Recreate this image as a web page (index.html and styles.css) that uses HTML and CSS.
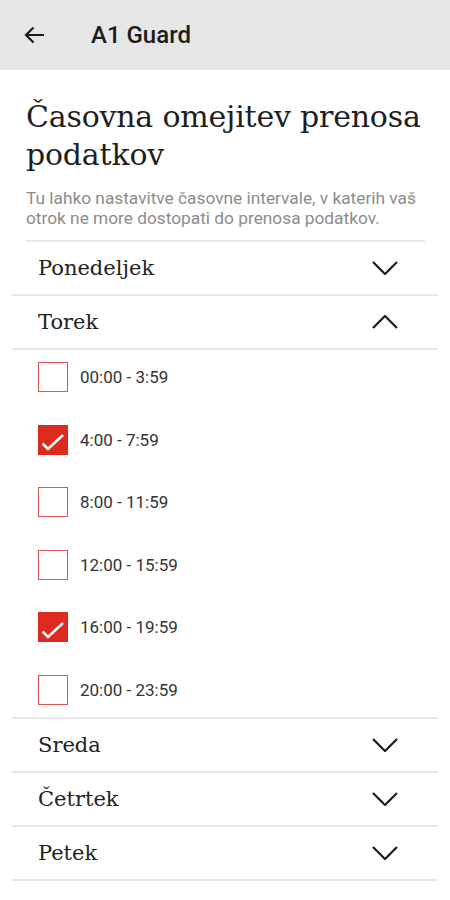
FILE: index.html
```html
<!DOCTYPE html>
<html lang="sl">
<head>
<meta charset="utf-8">
<title>A1 Guard</title>
<link rel="stylesheet" href="styles.css">
</head>
<body>
<header class="appbar">
  <svg class="back" width="21" height="18" viewBox="0 0 21 18"><path d="M20 9H2M9.5 1.5L2 9l7.5 7.5" fill="none" stroke="#1a1a1a" stroke-width="2.2"/></svg>
  <span class="appbar-title">A1 Guard</span>
</header>
<main class="content">
  <div class="intro">
    <h1 class="title">Časovna omejitev prenosa podatkov</h1>
    <p class="desc">Tu lahko nastavitve časovne intervale, v katerih vaš otrok ne more dostopati do prenosa podatkov.</p>
  </div>
  <div class="divider inset"></div>
  <div class="day"><span class="day-name">Ponedeljek</span><svg class="chev" width="26" height="14" viewBox="0 0 26 14"><path d="M1 1l12 12L25 1" fill="none" stroke="#1a1a1a" stroke-width="2.2"/></svg></div>
  <div class="divider"></div>
  <div class="day"><span class="day-name">Torek</span><svg class="chev" width="26" height="14" viewBox="0 0 26 14"><path d="M1 13L13 1l12 12" fill="none" stroke="#1a1a1a" stroke-width="2.2"/></svg></div>
  <div class="divider"></div>
  <div class="slots">
    <div class="slot"><span class="box"></span><span class="time">00:00 - 3:59</span></div>
    <div class="slot"><span class="box checked"><svg width="30" height="30" viewBox="0 0 30 30"><path d="M4.5 19.5l5.5 5.5L25 11" fill="none" stroke="#fff" stroke-width="2.6"/></svg></span><span class="time">4:00 - 7:59</span></div>
    <div class="slot"><span class="box"></span><span class="time">8:00 - 11:59</span></div>
    <div class="slot"><span class="box"></span><span class="time">12:00 - 15:59</span></div>
    <div class="slot"><span class="box checked"><svg width="30" height="30" viewBox="0 0 30 30"><path d="M4.5 19.5l5.5 5.5L25 11" fill="none" stroke="#fff" stroke-width="2.6"/></svg></span><span class="time">16:00 - 19:59</span></div>
    <div class="slot"><span class="box"></span><span class="time">20:00 - 23:59</span></div>
  </div>
  <div class="divider"></div>
  <div class="day"><span class="day-name">Sreda</span><svg class="chev" width="26" height="14" viewBox="0 0 26 14"><path d="M1 1l12 12L25 1" fill="none" stroke="#1a1a1a" stroke-width="2.2"/></svg></div>
  <div class="divider"></div>
  <div class="day"><span class="day-name">Četrtek</span><svg class="chev" width="26" height="14" viewBox="0 0 26 14"><path d="M1 1l12 12L25 1" fill="none" stroke="#1a1a1a" stroke-width="2.2"/></svg></div>
  <div class="divider"></div>
  <div class="day"><span class="day-name">Petek</span><svg class="chev" width="26" height="14" viewBox="0 0 26 14"><path d="M1 1l12 12L25 1" fill="none" stroke="#1a1a1a" stroke-width="2.2"/></svg></div>
  <div class="divider"></div>
</main>
</body>
</html>
```
FILE: styles.css
```css
* { box-sizing: border-box; }
html, body { margin: 0; padding: 0; background: #fff; }
body { font-family: Roboto, "Liberation Sans", sans-serif; color: #222; width: 450px; }

.appbar {
  height: 70px;
  background: #e6e6e6;
  display: flex;
  align-items: center;
  padding-left: 24px;
}
.back { display: block; }
.appbar-title {
  margin-left: 46px;
  font-family: Roboto, sans-serif;
  font-weight: 500;
  font-size: 24px;
  color: #1c1c1c;
}

.content { padding: 0 12px; }

.intro { padding: 28px 14px 0; }
.title {
  margin: 0;
  font-family: "DejaVu Serif", "Liberation Serif", serif;
  font-weight: normal;
  font-size: 30px;
  line-height: 38px;
  color: #1e1e1e;
  letter-spacing: -0.2px;
}
.desc {
  margin: 14px 0 12px;
  font-size: 17.3px;
  line-height: 20px;
  color: #8c8c8c;
}

.divider { height: 2px; background: #e8e8e8; }
.divider.inset { margin: 0 13px 0 14px; }

.day {
  height: 52px;
  display: flex;
  align-items: center;
  justify-content: space-between;
  padding: 0 40px 0 26px;
}
.day-name {
  font-family: "DejaVu Serif", "Liberation Serif", serif;
  font-size: 21px;
  color: #222;
}
.chev { display: block; }

.slots {
  display: flex;
  flex-direction: column;
  gap: 32.6px;
  padding: 12px 26px 12px;
}
.slot { display: flex; align-items: center; height: 30px; }
.box {
  width: 30px;
  height: 30px;
  border: 1.5px solid #d9534f;
  background: #fff;
  display: block;
  position: relative;
}
.box.checked { background: #dc2a1e; border-color: #dc2a1e; }
.box svg { position: absolute; left: -1.5px; top: -1.5px; }
.time {
  margin-left: 12px;
  font-size: 17px;
  color: #333;
}
```
